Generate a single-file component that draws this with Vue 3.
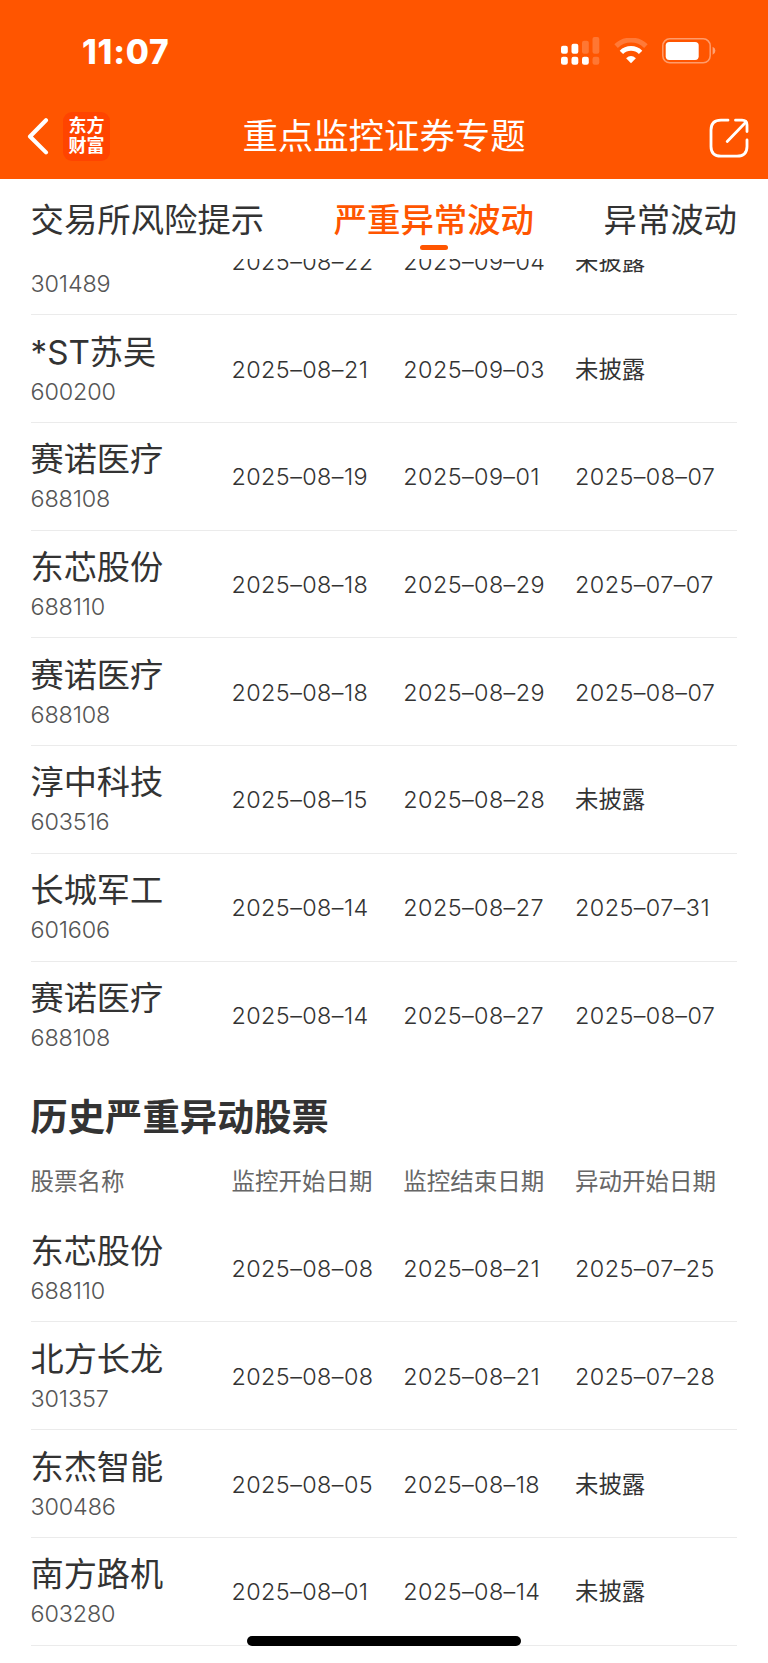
<script setup>
const tabs = [
  { label: '交易所风险提示', active: false },
  { label: '严重异常波动', active: true },
  { label: '异常波动', active: false },
]

const current = [
  { name: '思泉新材', code: '301489', start: '2025–08–22', end: '2025–09–04', move: '未披露' },
  { name: '*ST苏吴', code: '600200', start: '2025–08–21', end: '2025–09–03', move: '未披露' },
  { name: '赛诺医疗', code: '688108', start: '2025–08–19', end: '2025–09–01', move: '2025–08–07' },
  { name: '东芯股份', code: '688110', start: '2025–08–18', end: '2025–08–29', move: '2025–07–07' },
  { name: '赛诺医疗', code: '688108', start: '2025–08–18', end: '2025–08–29', move: '2025–08–07' },
  { name: '淳中科技', code: '603516', start: '2025–08–15', end: '2025–08–28', move: '未披露' },
  { name: '长城军工', code: '601606', start: '2025–08–14', end: '2025–08–27', move: '2025–07–31' },
  { name: '赛诺医疗', code: '688108', start: '2025–08–14', end: '2025–08–27', move: '2025–08–07' },
]

const columns = ['股票名称', '监控开始日期', '监控结束日期', '异动开始日期']

const history = [
  { name: '东芯股份', code: '688110', start: '2025–08–08', end: '2025–08–21', move: '2025–07–25' },
  { name: '北方长龙', code: '301357', start: '2025–08–08', end: '2025–08–21', move: '2025–07–28' },
  { name: '东杰智能', code: '300486', start: '2025–08–05', end: '2025–08–18', move: '未披露' },
  { name: '南方路机', code: '603280', start: '2025–08–01', end: '2025–08–14', move: '未披露' },
]

const isDate = (v) => v.startsWith('20')
</script>

<template>
  <div class="screen">
    <header class="top">
      <div class="status">
        <span class="clock">11:07</span>
        <div class="indicators">
          <svg class="signal" viewBox="0 0 39 28" width="39" height="28" fill="#fff">
            <rect x="0" y="8.7" width="6.8" height="8" rx="2" />
            <rect x="10.5" y="6.7" width="6.8" height="10" rx="2" />
            <rect x="21" y="3.7" width="6.8" height="13" rx="2" opacity=".2" />
            <rect x="31.5" y="0" width="6.8" height="16.7" rx="2" opacity=".2" />
            <rect x="0" y="19.7" width="6.8" height="8" rx="2.2" />
            <rect x="10.5" y="19.7" width="6.8" height="8" rx="2.2" />
            <rect x="21" y="19.7" width="6.8" height="8" rx="2.2" />
            <rect x="31.5" y="19.7" width="6.8" height="8" rx="2.2" opacity=".2" />
          </svg>
          <svg class="wifi" viewBox="0 0 34 26" width="34" height="26">
            <path d="M2.1 8.1A21.4 21.4 0 0 1 31.9 8.1" fill="none" stroke="#fff" stroke-width="5" opacity=".22" />
            <path d="M7.4 14.4A13.7 13.7 0 0 1 26.6 14.4" fill="none" stroke="#fff" stroke-width="4.8" />
            <path d="M17 25.2L12.1 20.2Q17 15.8 21.9 20.2Z" fill="#fff" />
          </svg>
          <svg class="battery" viewBox="0 0 54 26" width="54" height="26">
            <rect x=".8" y=".8" width="47.4" height="24" rx="7" fill="none" stroke="#fff" stroke-width="1.5" opacity=".42" />
            <rect x="3.7" y="3.9" width="33" height="18" rx="3.6" fill="#fff" />
            <path d="M50.6 8.8Q53.4 10 53.4 12.8Q53.4 15.6 50.6 16.8Z" fill="#fff" opacity=".45" />
          </svg>
        </div>
      </div>
      <nav class="nav">
        <div class="nav-side">
          <svg viewBox="0 0 22 37" width="22" height="37">
            <path d="M19 2.2L3 18.5L19 34.4" fill="none" stroke="#fff" stroke-width="4.1" stroke-linecap="round" stroke-linejoin="round" />
          </svg>
          <div class="logo"><span>东方</span><span>财富</span></div>
        </div>
        <h1>重点监控证券专题</h1>
        <div class="nav-side right">
          <svg viewBox="0 0 40 40" width="40" height="40" fill="none" stroke="#fff" stroke-width="2.8" stroke-linecap="round" stroke-linejoin="round">
            <path d="M19 2.2H12Q2 2.2 2 12V28.5Q2 38.2 12 38.2H28Q38 38.2 38 28.5V22" />
            <path d="M26.5 2.2H33Q38 2.2 38 7V13.5" />
            <path d="M18.2 23.5L37 4" />
          </svg>
        </div>
      </nav>
    </header>

    <div class="tabs">
      <div v-for="t in tabs" :key="t.label" class="tab" :class="{ active: t.active }">{{ t.label }}</div>
    </div>

    <main class="list">
      <section class="group first">
        <div v-for="(r, i) in current" :key="i" class="row">
          <div class="stock">
            <div class="name">{{ r.name }}</div>
            <div class="code">{{ r.code }}</div>
          </div>
          <div class="cell date">{{ r.start }}</div>
          <div class="cell date">{{ r.end }}</div>
          <div class="cell" :class="{ date: isDate(r.move) }">{{ r.move }}</div>
        </div>
      </section>
      <h2>历史严重异动股票</h2>
      <div class="head">
        <div v-for="c in columns" :key="c">{{ c }}</div>
      </div>
      <section class="group">
        <div v-for="(r, i) in history" :key="i" class="row">
          <div class="stock">
            <div class="name">{{ r.name }}</div>
            <div class="code">{{ r.code }}</div>
          </div>
          <div class="cell date">{{ r.start }}</div>
          <div class="cell date">{{ r.end }}</div>
          <div class="cell" :class="{ date: isDate(r.move) }">{{ r.move }}</div>
        </div>
      </section>
    </main>
    <div class="home"></div>
  </div>
</template>

<style>
body {
  background: #fff;
}
</style>

<style scoped>
.screen {
  position: relative;
  display: flex;
  flex-direction: column;
  width: 768px;
  height: 1663px;
  overflow: hidden;
  background: #fff;
  color: #333;
  font-family: Inter, "Noto Sans CJK SC", sans-serif;
}
.top {
  flex: none;
  height: 179px;
  background: #ff5500;
  color: #fff;
}
.status {
  display: flex;
  justify-content: space-between;
  height: 92px;
  padding: 0 52px 0 82px;
}
.clock {
  margin-top: 32px;
  font-size: 33.5px;
  line-height: 40px;
  font-weight: 800;
  letter-spacing: 0.8px;
}
.indicators {
  display: flex;
  align-items: flex-start;
  padding-top: 37px;
}
.wifi {
  margin: 1px 14px 0 14px;
}
.battery {
  margin-top: 1px;
}
.nav {
  display: flex;
  align-items: center;
  justify-content: space-between;
  height: 88px;
}
.nav-side {
  display: flex;
  align-items: center;
  width: 150px;
  padding-left: 26.5px;
  box-sizing: border-box;
}
.nav-side.right {
  justify-content: flex-end;
  padding: 4px 19.5px 0 0;
}
.logo {
  display: flex;
  flex-direction: column;
  align-items: center;
  justify-content: center;
  width: 47px;
  height: 49px;
  margin-left: 14.5px;
  border-radius: 9px;
  background: #ff4400;
  font-size: 18px;
  line-height: 20.5px;
  font-weight: 700;
}
h1 {
  margin: 2px 0 0;
  font-size: 35.4px;
  line-height: 50px;
  font-weight: 400;
}
.tabs {
  flex: none;
  display: flex;
  justify-content: space-between;
  height: 80px;
  padding: 0 31px 0 30.5px;
  font-size: 33.4px;
  line-height: 82px;
}
.tab.active {
  position: relative;
  color: #ff5500;
  font-weight: 500;
}
.tab.active::after {
  content: "";
  position: absolute;
  left: 50%;
  top: 66px;
  width: 28px;
  height: 5px;
  margin-left: -14px;
  border-radius: 2.5px;
  background: #ff5500;
}
.list {
  flex: 1;
  overflow: hidden;
  padding: 0 31px 0 30.5px;
}
.group.first {
  margin-top: -51.5px;
}
.row,
.head {
  display: grid;
  grid-template-columns: 201px 171.8px 171.8px 1fr;
  align-items: center;
}
.row {
  height: 107.72px;
  box-sizing: border-box;
  padding-top: 2px;
  border-bottom: 1px solid #ebebeb;
}
.group.first .row:last-child {
  border-bottom-color: transparent;
}
.group.first .row:first-child .name {
  line-height: 40px;
  padding-bottom: 4px;
}
.name {
  font-size: 33.2px;
  line-height: 43px;
  padding-bottom: 1px;
  white-space: nowrap;
}
.code {
  font-size: 23.4px;
  line-height: 34px;
  font-weight: 300;
  letter-spacing: -0.15px;
  color: #555;
}
.cell {
  font-size: 23.4px;
  line-height: 34px;
  white-space: nowrap;
}
.cell.date {
  font-weight: 350;
  letter-spacing: 0.4px;
}
h2 {
  margin: 21px 0 0;
  font-size: 37.3px;
  line-height: 56px;
  font-weight: 700;
}
.head {
  height: 68.5px;
  box-sizing: border-box;
  padding-bottom: 2px;
  font-size: 23.5px;
  color: #666;
}
.home {
  position: absolute;
  left: 247px;
  bottom: 17px;
  width: 274px;
  height: 10px;
  border-radius: 5px;
  background: #000;
}
</style>
